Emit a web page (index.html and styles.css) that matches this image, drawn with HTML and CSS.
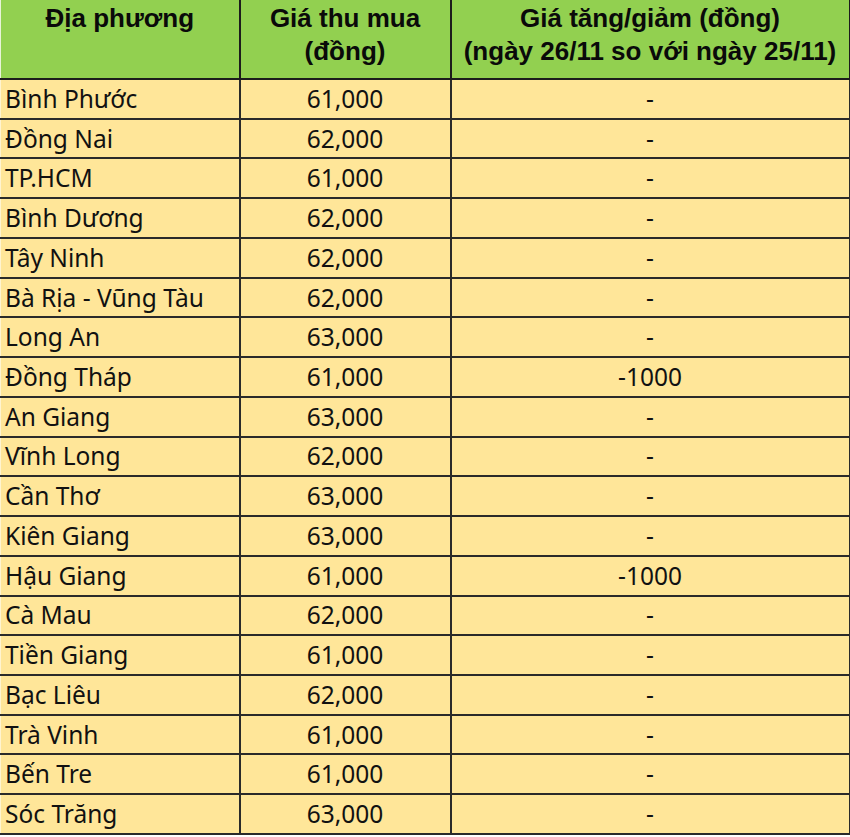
FILE: index.html
```html
<!DOCTYPE html>
<html lang="vi">
<head>
<meta charset="utf-8">
<link rel="stylesheet" href="styles.css">
</head>
<body>
<table class="price-table">
  <colgroup>
    <col class="c1"><col class="c2"><col class="c3">
  </colgroup>
  <thead>
    <tr>
      <th>Địa phương</th>
      <th>Giá thu mua<br>(đồng)</th>
      <th>Giá tăng/giảm (đồng)<br>(ngày 26/11 so với ngày 25/11)</th>
    </tr>
  </thead>
  <tbody>
    <tr><td>Bình Phước</td><td>61,000</td><td>-</td></tr>
    <tr><td>Đồng Nai</td><td>62,000</td><td>-</td></tr>
    <tr><td>TP.HCM</td><td>61,000</td><td>-</td></tr>
    <tr><td>Bình Dương</td><td>62,000</td><td>-</td></tr>
    <tr><td>Tây Ninh</td><td>62,000</td><td>-</td></tr>
    <tr><td>Bà Rịa - Vũng Tàu</td><td>62,000</td><td>-</td></tr>
    <tr><td>Long An</td><td>63,000</td><td>-</td></tr>
    <tr><td>Đồng Tháp</td><td>61,000</td><td>-1000</td></tr>
    <tr><td>An Giang</td><td>63,000</td><td>-</td></tr>
    <tr><td>Vĩnh Long</td><td>62,000</td><td>-</td></tr>
    <tr><td>Cần Thơ</td><td>63,000</td><td>-</td></tr>
    <tr><td>Kiên Giang</td><td>63,000</td><td>-</td></tr>
    <tr><td>Hậu Giang</td><td>61,000</td><td>-1000</td></tr>
    <tr><td>Cà Mau</td><td>62,000</td><td>-</td></tr>
    <tr><td>Tiền Giang</td><td>61,000</td><td>-</td></tr>
    <tr><td>Bạc Liêu</td><td>62,000</td><td>-</td></tr>
    <tr><td>Trà Vinh</td><td>61,000</td><td>-</td></tr>
    <tr><td>Bến Tre</td><td>61,000</td><td>-</td></tr>
    <tr><td>Sóc Trăng</td><td>63,000</td><td>-</td></tr>
  </tbody>
</table>
</body>
</html>
```

FILE: styles.css
```css
html, body {
  margin: 0;
  padding: 0;
  background: #ffffff;
}

.price-table {
  border-collapse: collapse;
  table-layout: fixed;
  width: 849px;
  font-family: "Noto Sans", "Open Sans", sans-serif;
  color: #111111;
}

.c1 { width: 239px; }
.c2 { width: 211px; }
.c3 { width: 399px; }

.price-table th {
  background: #92d050;
  font-family: "Liberation Sans", Arial, sans-serif;
  font-weight: bold;
  font-size: 26px;
  line-height: 33px;
  height: 79px;
  box-sizing: border-box;
  padding: 2px 0 10px;
  vertical-align: top;
  text-align: center;
  border-left: 2px solid #1c1c1c;
  border-bottom: 2px solid #1c1c1c;
  color: #0a0a0a;
  white-space: nowrap;
}

.price-table th:first-child {
  border-left: 1px solid #e8f3d8;
}

.price-table th:last-child {
  border-right: 2px solid #1c1c1c;
}

.price-table td {
  background: #ffe699;
  font-size: 24.5px;
  height: 39.74px;
  box-sizing: border-box;
  padding: 0 4px;
  vertical-align: middle;
  text-align: center;
  border: 2px solid #2a2a2a;
  line-height: 30px;
}

.price-table td:first-child {
  text-align: left;
  border-left: 1px solid #fff4d0;
}
```
